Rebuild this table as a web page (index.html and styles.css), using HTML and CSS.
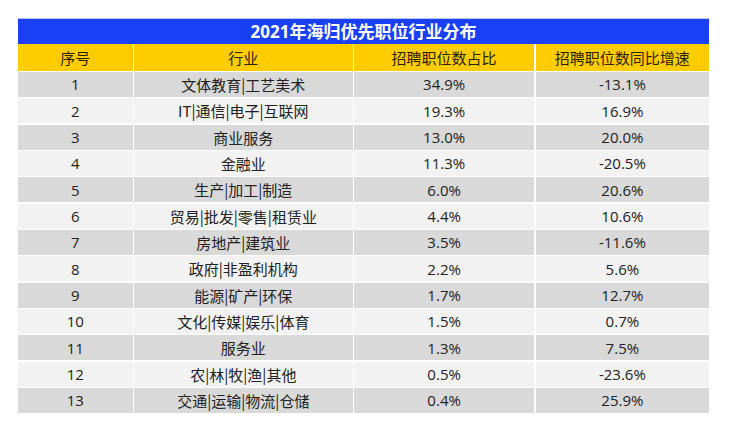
FILE: index.html
```html
<!DOCTYPE html>
<html lang="zh-CN">
<head>
<meta charset="utf-8">
<title>2021年海归优先职位行业分布</title>
<link rel="stylesheet" href="styles.css">
</head>
<body>
<div class="sheet">
  <div class="title">2021年海归优先职位行业分布</div>
  <div class="grid">
    <div class="hd">序号</div><div class="hd">行业</div><div class="hd">招聘职位数占比</div><div class="hd">招聘职位数同比增速</div>
    <div class="c d">1</div><div class="c d t">文体教育|工艺美术</div><div class="c d">34.9%</div><div class="c d">-13.1%</div>
    <div class="c l">2</div><div class="c l t">IT|通信|电子|互联网</div><div class="c l">19.3%</div><div class="c l">16.9%</div>
    <div class="c d">3</div><div class="c d t">商业服务</div><div class="c d">13.0%</div><div class="c d">20.0%</div>
    <div class="c l">4</div><div class="c l t">金融业</div><div class="c l">11.3%</div><div class="c l">-20.5%</div>
    <div class="c d">5</div><div class="c d t">生产|加工|制造</div><div class="c d">6.0%</div><div class="c d">20.6%</div>
    <div class="c l">6</div><div class="c l t">贸易|批发|零售|租赁业</div><div class="c l">4.4%</div><div class="c l">10.6%</div>
    <div class="c d">7</div><div class="c d t">房地产|建筑业</div><div class="c d">3.5%</div><div class="c d">-11.6%</div>
    <div class="c l">8</div><div class="c l t">政府|非盈利机构</div><div class="c l">2.2%</div><div class="c l">5.6%</div>
    <div class="c d">9</div><div class="c d t">能源|矿产|环保</div><div class="c d">1.7%</div><div class="c d">12.7%</div>
    <div class="c l">10</div><div class="c l t">文化|传媒|娱乐|体育</div><div class="c l">1.5%</div><div class="c l">0.7%</div>
    <div class="c d">11</div><div class="c d t">服务业</div><div class="c d">1.3%</div><div class="c d">7.5%</div>
    <div class="c l">12</div><div class="c l t">农|林|牧|渔|其他</div><div class="c l">0.5%</div><div class="c l">-23.6%</div>
    <div class="c d">13</div><div class="c d t">交通|运输|物流|仓储</div><div class="c d">0.4%</div><div class="c d">25.9%</div>
  </div>
</div>
</body>
</html>
```
FILE: styles.css
```css
html, body {
  margin: 0;
  padding: 0;
  background: #ffffff;
}
body {
  font-family: "Open Sans", "Noto Sans CJK SC", sans-serif;
  color: #222222;
}
.sheet {
  margin: 18px 0 0 18px;
  width: 691px;
}
.title {
  height: 25px;
  border-top: 1px solid #b9c6fb;
  background: #1a40f5;
  color: #ffffff;
  font-weight: 700;
  font-size: 17px;
  line-height: 25px;
  text-align: center;
}
.grid {
  display: grid;
  grid-template-columns: 114.7px 218.7px 180.3px 173.6px;
  grid-template-rows: 26.6px;
  grid-auto-rows: 25px;
  column-gap: 1.3px;
  row-gap: 1.34px;
  background: #ffffff;
}
.hd {
  background: #ffcc00;
  font-size: 15px;
  color: #2a2200;
  display: flex;
  align-items: center;
  justify-content: center;
}
.c {
  font-size: 15px;
  display: flex;
  align-items: center;
  justify-content: center;
  white-space: nowrap;
}
.t {
  font-family: "Noto Sans CJK SC", sans-serif;
}
.d {
  background: #d9d9d9;
}
.l {
  background: #f2f2f2;
}
```
